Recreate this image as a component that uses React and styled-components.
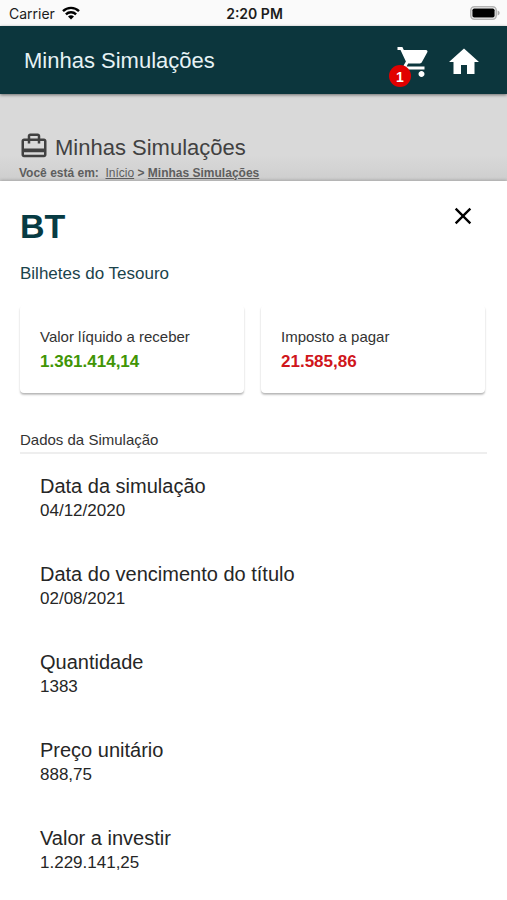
import React, { useState } from 'react';
import styled, { createGlobalStyle } from 'styled-components';
import { MdShoppingCart, MdHome, MdOutlineCardTravel, MdClose } from 'react-icons/md';

const GlobalStyle = createGlobalStyle`
  * {
    box-sizing: border-box;
  }
  body {
    margin: 0;
    background-color: #fff;
    color: #262626;
    font-family: "Liberation Sans", Arial, Helvetica, sans-serif;
  }
  h1, h2, h3, p, dl, dd {
    margin: 0;
    font-weight: normal;
  }
`;

const StatusBar = styled.div`
  display: grid;
  grid-template-columns: 1fr auto 1fr;
  align-items: center;
  height: 26px;
  padding: 0 7px 0 9px;
  background-color: #fafafa;
  color: #1c1c1c;
  font-family: Inter, sans-serif;
  font-size: 14px;
`;

const Carrier = styled.div`
  display: flex;
  align-items: center;
  gap: 7px;
`;

const Time = styled.span`
  font-weight: 600;
`;

const Battery = styled.svg`
  justify-self: end;
`;

const Header = styled.header`
  position: relative;
  display: flex;
  align-items: center;
  justify-content: space-between;
  height: 68px;
  padding: 2px 25px 0 24px;
  background-color: #0c363d;
  box-shadow: 0 1px 3px rgba(0, 0, 0, 0.5);
`;

const HeaderTitle = styled.h1`
  color: #e6f2f5;
  font-size: 22px;
  line-height: 28px;
`;

const Actions = styled.nav`
  display: flex;
  gap: 14px;
  padding-top: 2px;
`;

const IconLink = styled.a`
  position: relative;
  display: flex;
  color: #fff;
  font-size: 36px;
`;

const Badge = styled.span`
  position: absolute;
  left: -7px;
  bottom: -7px;
  width: 22px;
  height: 22px;
  border-radius: 50%;
  background-color: #e10000;
  font-size: 14px;
  font-weight: bold;
  line-height: 25px;
  text-align: center;
`;

const Backdrop = styled.section`
  padding: 36px 20px 0;
  background: linear-gradient(#d9d9d9 70%, #cecece);
  color: #414141;
`;

const PageTitle = styled.h2`
  display: flex;
  align-items: center;
  gap: 6px;
  margin-left: -1px;
  font-size: 22px;
  line-height: 35px;
  svg {
    font-size: 30px;
    margin-top: -4px;
  }
`;

const Breadcrumb = styled.p`
  color: #5e5e5e;
  font-size: 12px;
  font-weight: bold;
  line-height: 16px;
  margin-left: -1px;
`;

const Crumb = styled.a`
  color: inherit;
  font-weight: ${(props) => (props.$current ? 'bold' : 'normal')};
`;

const Sheet = styled.main`
  position: relative;
  padding: 21px 20px 28px;
  background-color: #fff;
  box-shadow: 0 -1px 3px rgba(0, 0, 0, 0.2);
`;

const SheetTop = styled.div`
  display: flex;
  align-items: flex-start;
  justify-content: space-between;
  padding-right: 10px;
`;

const Ticker = styled.h2`
  color: #073b43;
  font-size: 34px;
  font-weight: bold;
  line-height: 48px;
`;

const CloseButton = styled.button`
  display: flex;
  padding: 0;
  border: none;
  background: none;
  color: #000;
  font-size: 28px;
  cursor: pointer;
`;

const Subtitle = styled.p`
  margin-top: 14px;
  color: #1a434b;
  font-size: 17px;
  line-height: 20px;
`;

const Cards = styled.div`
  display: grid;
  grid-template-columns: 1fr 1fr;
  gap: 17px;
  margin-top: 21px;
  padding-right: 2px;
`;

const Card = styled.div`
  padding: 20px 20px 18px;
  border-radius: 4px;
  box-shadow: 0 2px 2px rgba(0, 0, 0, 0.22), 0 1px 1px rgba(0, 0, 0, 0.08);
`;

const CardLabel = styled.p`
  color: #333;
  font-size: 15px;
  line-height: 24px;
`;

const CardValue = styled.p`
  color: ${(props) => props.$color};
  font-size: 17px;
  font-weight: bold;
  line-height: 26px;
`;

const SectionTitle = styled.h3`
  margin-top: 37px;
  padding-bottom: 2px;
  border-bottom: 2px solid #eee;
  color: #333;
  font-size: 15px;
  line-height: 20px;
`;

const DataList = styled.dl`
  display: flex;
  flex-direction: column;
  gap: 38px;
  padding: 20px 20px 0;
`;

const Label = styled.dt`
  font-size: 20px;
  line-height: 24px;
`;

const Value = styled.dd`
  font-size: 17px;
  line-height: 26px;
`;

const simulation = [
  { label: 'Data da simulação', value: '04/12/2020' },
  { label: 'Data do vencimento do título', value: '02/08/2021' },
  { label: 'Quantidade', value: '1383' },
  { label: 'Preço unitário', value: '888,75' },
  { label: 'Valor a investir', value: '1.229.141,25' },
];

const App = () => {
  const [open, setOpen] = useState(true);

  return (
    <>
      <GlobalStyle />
      <StatusBar>
        <Carrier>
          Carrier
          <svg width="18" height="14" viewBox="0 0 18 14" fill="none" stroke="#000" strokeWidth="2.4">
            <path d="M1 5.2a11.4 11.4 0 0 1 16 0" />
            <path d="M3.9 8.4a7.3 7.3 0 0 1 10.2 0" />
            <path d="M9 13.6 6 10.6a4.3 4.3 0 0 1 6 0z" fill="#000" stroke="none" />
          </svg>
        </Carrier>
        <Time>2:20 PM</Time>
        <Battery width="30" height="14" viewBox="0 0 30 14">
          <rect x="0.8" y="0.8" width="25.4" height="12.4" rx="3.6" fill="#fafafa" stroke="#b4b4b4" strokeWidth="1.6" />
          <rect x="2.4" y="2.4" width="22.2" height="9.2" rx="1.8" fill="#000" />
          <path d="M27.6 4.6c1.4.4 2 1.3 2 2.4s-.6 2-2 2.4z" fill="#aaa" />
        </Battery>
      </StatusBar>
      <Header>
        <HeaderTitle>Minhas Simulações</HeaderTitle>
        <Actions>
          <IconLink href="#carrinho" aria-label="Carrinho">
            <MdShoppingCart />
            <Badge>1</Badge>
          </IconLink>
          <IconLink href="#inicio" aria-label="Início">
            <MdHome />
          </IconLink>
        </Actions>
      </Header>
      <Backdrop>
        <PageTitle>
          <MdOutlineCardTravel />
          Minhas Simulações
        </PageTitle>
        <Breadcrumb>
          Você está em:&nbsp; <Crumb href="#inicio">Início</Crumb> &gt;{' '}
          <Crumb href="#simulacoes" $current>Minhas Simulações</Crumb>
        </Breadcrumb>
      </Backdrop>
      {open && (
        <Sheet>
          <SheetTop>
            <Ticker>BT</Ticker>
            <CloseButton type="button" aria-label="Fechar" onClick={() => setOpen(false)}>
              <MdClose />
            </CloseButton>
          </SheetTop>
          <Subtitle>Bilhetes do Tesouro</Subtitle>
          <Cards>
            <Card>
              <CardLabel>Valor líquido a receber</CardLabel>
              <CardValue $color="#419505">1.361.414,14</CardValue>
            </Card>
            <Card>
              <CardLabel>Imposto a pagar</CardLabel>
              <CardValue $color="#d0151b">21.585,86</CardValue>
            </Card>
          </Cards>
          <SectionTitle>Dados da Simulação</SectionTitle>
          <DataList>
            {simulation.map((item) => (
              <div key={item.label}>
                <Label>{item.label}</Label>
                <Value>{item.value}</Value>
              </div>
            ))}
          </DataList>
        </Sheet>
      )}
    </>
  );
};

export default App;
